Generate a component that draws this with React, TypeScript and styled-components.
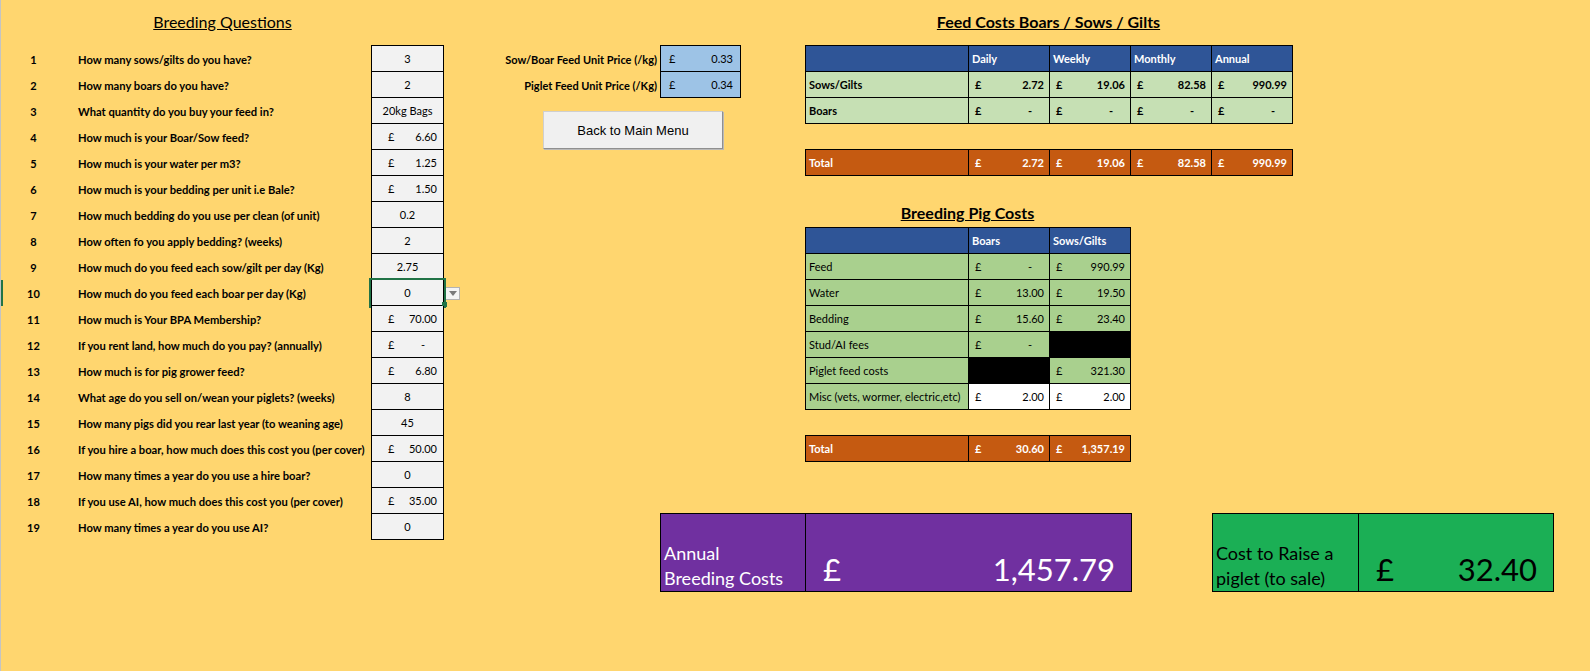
import React from "react";
import styled, { createGlobalStyle, css } from "styled-components";

const GlobalStyle = createGlobalStyle`
  html, body {
    margin: 0;
    padding: 0;
  }
  body {
    background: #ffd66f;
    font-family: Lato, "Open Sans", sans-serif;
    color: #000;
  }
`;

type Tone = "head" | "light" | "mid" | "total" | "black" | "white";

const tones: Record<Tone, { bg: string; fg: string }> = {
  head: { bg: "#2f5597", fg: "#fff" },
  light: { bg: "#c6e0b4", fg: "#000" },
  mid: { bg: "#a9d08e", fg: "#000" },
  total: { bg: "#c55a11", fg: "#fff" },
  black: { bg: "#000", fg: "#000" },
  white: { bg: "#fff", fg: "#000" },
};

type Question = { q: string; v: string; money?: boolean; active?: boolean };

const questions: Question[] = [
  { q: "How many sows/gilts do you have?", v: "3" },
  { q: "How many boars do you have?", v: "2" },
  { q: "What quantity do you buy your feed in?", v: "20kg Bags" },
  { q: "How much is your Boar/Sow feed?", v: "6.60", money: true },
  { q: "How much is your water per m3?", v: "1.25", money: true },
  { q: "How much is your bedding per unit i.e Bale?", v: "1.50", money: true },
  { q: "How much bedding do you use per clean (of unit)", v: "0.2" },
  { q: "How often fo you apply bedding? (weeks)", v: "2" },
  { q: "How much do you feed each sow/gilt per day (Kg)", v: "2.75" },
  { q: "How much do you feed each boar per day (Kg)", v: "0", active: true },
  { q: "How much is Your BPA Membership?", v: "70.00", money: true },
  { q: "If you rent land, how much do you pay? (annually)", v: "-", money: true },
  { q: "How much is for pig grower feed?", v: "6.80", money: true },
  { q: "What age do you sell on/wean your piglets? (weeks)", v: "8" },
  { q: "How many pigs did you rear last year (to weaning age)", v: "45" },
  { q: "If you hire a boar, how much does this cost you (per cover)", v: "50.00", money: true },
  { q: "How many times a year do you use a hire boar?", v: "0" },
  { q: "If you use AI, how much does this cost you (per cover)", v: "35.00", money: true },
  { q: "How many times a year do you use AI?", v: "0" },
];

const feedRows = [
  { label: "Sows/Gilts", values: ["2.72", "19.06", "82.58", "990.99"] },
  { label: "Boars", values: ["-", "-", "-", "-"] },
];

type PigCell = { v: string; tone: Tone };

const pigRows: { label: string; cells: PigCell[] }[] = [
  { label: "Feed", cells: [{ v: "-", tone: "mid" }, { v: "990.99", tone: "mid" }] },
  { label: "Water", cells: [{ v: "13.00", tone: "mid" }, { v: "19.50", tone: "mid" }] },
  { label: "Bedding", cells: [{ v: "15.60", tone: "mid" }, { v: "23.40", tone: "mid" }] },
  { label: "Stud/AI fees", cells: [{ v: "-", tone: "mid" }, { v: "", tone: "black" }] },
  { label: "Piglet feed costs", cells: [{ v: "", tone: "black" }, { v: "321.30", tone: "mid" }] },
  {
    label: "Misc (vets, wormer, electric,etc)",
    cells: [{ v: "2.00", tone: "white" }, { v: "2.00", tone: "white" }],
  },
];

function App() {
  return (
    <>
      <GlobalStyle />
      <Sheet>
        <Questions>
          <SheetTitle>Breeding Questions</SheetTitle>
          {questions.map((item, i) => (
            <QuestionRow key={i}>
              <RowNumber $active={item.active}>{i + 1}</RowNumber>
              <QuestionText>{item.q}</QuestionText>
              <InputCell $first={i === 0} $active={item.active}>
                {item.money ? (
                  <Money $left={16} $right={6}>
                    <span>£</span>
                    {item.v === "-" ? <Dash>-</Dash> : <span>{item.v}</span>}
                  </Money>
                ) : (
                  item.v
                )}
              </InputCell>
              {item.active && <DropButton />}
            </QuestionRow>
          ))}
        </Questions>

        <RightArea>
          <TopRow>
            <PriceArea>
              <PriceRow>
                <PriceLabel>Sow/Boar Feed Unit Price (/kg)</PriceLabel>
                <PriceBox $first>
                  <Money $left={8} $right={7}>
                    <span>£</span>
                    <span>0.33</span>
                  </Money>
                </PriceBox>
              </PriceRow>
              <PriceRow>
                <PriceLabel>Piglet Feed Unit Price (/Kg)</PriceLabel>
                <PriceBox>
                  <Money $left={8} $right={7}>
                    <span>£</span>
                    <span>0.34</span>
                  </Money>
                </PriceBox>
              </PriceRow>
              <MenuButton type="button">Back to Main Menu</MenuButton>
            </PriceArea>

            <Tables>
              <TableTitle $offset={12} $height={45}>
                <TitleText $width={487}>Feed Costs Boars / Sows / Gilts</TitleText>
              </TableTitle>
              <CostGrid $cols="163px 81px 81px 81px 81px">
                <CostCell $tone="head" />
                {["Daily", "Weekly", "Monthly", "Annual"].map((h) => (
                  <CostCell key={h} $tone="head" $bold>
                    {h}
                  </CostCell>
                ))}
                {feedRows.map((row) => (
                  <React.Fragment key={row.label}>
                    <CostCell $tone="light" $bold>
                      {row.label}
                    </CostCell>
                    {row.values.map((v, j) => (
                      <MoneyCell key={j} $tone="light" $bold>
                        <span>£</span>
                        {v === "-" ? <Dash>-</Dash> : <span>{v}</span>}
                      </MoneyCell>
                    ))}
                  </React.Fragment>
                ))}
              </CostGrid>
              <CostGrid $cols="163px 81px 81px 81px 81px" $gap>
                <CostCell $tone="total" $bold>
                  Total
                </CostCell>
                {["2.72", "19.06", "82.58", "990.99"].map((v) => (
                  <MoneyCell key={v} $tone="total" $bold>
                    <span>£</span>
                    <span>{v}</span>
                  </MoneyCell>
                ))}
              </CostGrid>

              <TableTitle $offset={27} $height={51}>
                <TitleText $width={325}>Breeding Pig Costs</TitleText>
              </TableTitle>
              <CostGrid $cols="163px 81px 81px">
                <CostCell $tone="head" />
                <CostCell $tone="head" $bold>
                  Boars
                </CostCell>
                <CostCell $tone="head" $bold>
                  Sows/Gilts
                </CostCell>
                {pigRows.map((row) => (
                  <React.Fragment key={row.label}>
                    <CostCell $tone="mid">{row.label}</CostCell>
                    {row.cells.map((c, j) =>
                      c.tone === "black" ? (
                        <CostCell key={j} $tone="black" />
                      ) : (
                        <MoneyCell key={j} $tone={c.tone}>
                          <span>£</span>
                          {c.v === "-" ? <Dash>-</Dash> : <span>{c.v}</span>}
                        </MoneyCell>
                      )
                    )}
                  </React.Fragment>
                ))}
              </CostGrid>
              <CostGrid $cols="163px 81px 81px" $gap>
                <CostCell $tone="total" $bold>
                  Total
                </CostCell>
                <MoneyCell $tone="total" $bold>
                  <span>£</span>
                  <span>30.60</span>
                </MoneyCell>
                <MoneyCell $tone="total" $bold>
                  <span>£</span>
                  <span>1,357.19</span>
                </MoneyCell>
              </CostGrid>
            </Tables>
          </TopRow>

          <BottomRow>
            <SummaryBox $bg="#7030a0" $fg="#fff">
              <SummaryLabel $width={145}>
                <span>
                  Annual
                  <br />
                  Breeding Costs
                </span>
              </SummaryLabel>
              <SummaryValue $width={325}>
                <span>£</span>
                <span>1,457.79</span>
              </SummaryValue>
            </SummaryBox>
            <SummaryBox $bg="#1baf55" $fg="#000">
              <SummaryLabel $width={146}>
                <span>
                  Cost to Raise a
                  <br />
                  piglet (to sale)
                </span>
              </SummaryLabel>
              <SummaryValue $width={194}>
                <span>£</span>
                <span>32.40</span>
              </SummaryValue>
            </SummaryBox>
          </BottomRow>
        </RightArea>
      </Sheet>
    </>
  );
}

const Sheet = styled.div`
  display: flex;
  align-items: flex-start;
  min-height: 671px;
  box-sizing: border-box;
  border-left: 1px solid #c4c4c4;
`;

const Questions = styled.section`
  flex: none;
  width: 469px;
`;

const SheetTitle = styled.h2`
  margin: 0;
  width: 443px;
  height: 46px;
  box-sizing: border-box;
  padding-top: 12px;
  line-height: 20px;
  text-align: center;
  font-size: 16px;
  font-weight: 400;
  text-decoration: underline;
`;

const QuestionRow = styled.div`
  display: grid;
  grid-template-columns: 65px 305px 73px 26px;
  height: 26px;
  font-size: 11px;
`;

const RowNumber = styled.div<{ $active?: boolean }>`
  display: flex;
  align-items: center;
  justify-content: center;
  font-weight: 700;
  ${(p) =>
    p.$active &&
    css`
      box-shadow: inset 2px 0 0 #217346;
    `}
`;

const QuestionText = styled.div`
  display: flex;
  align-items: center;
  padding-left: 12px;
  font-weight: 700;
  font-size: 11.2px;
  white-space: nowrap;
`;

const InputCell = styled.div<{ $first?: boolean; $active?: boolean }>`
  position: relative;
  box-sizing: border-box;
  height: 26px;
  display: flex;
  align-items: center;
  justify-content: center;
  background: #f2f2f2;
  border: 1px solid #000;
  border-top: none;
  ${(p) =>
    p.$first &&
    css`
      margin-top: -1px;
      height: 27px;
      border-top: 1px solid #000;
    `}
  ${(p) =>
    p.$active &&
    css`
      outline: 2px solid #217346;
      outline-offset: 0;
      &::after {
        content: "";
        position: absolute;
        right: -4px;
        bottom: -2px;
        width: 5px;
        height: 5px;
        background: #217346;
      }
    `}
`;

const Money = styled.div<{ $left: number; $right: number }>`
  display: flex;
  justify-content: space-between;
  width: 100%;
  box-sizing: border-box;
  padding: 0 ${(p) => p.$right}px 0 ${(p) => p.$left}px;
`;

const Dash = styled.span`
  padding-right: 12px;
`;

const DropButton = styled.div`
  width: 15px;
  height: 13px;
  margin: 7px 0 0 1px;
  box-sizing: border-box;
  background: #f4f4f4;
  border: 1px solid #b3b3b3;
  display: flex;
  align-items: center;
  justify-content: center;
  &::before {
    content: "";
    border-left: 4px solid transparent;
    border-right: 4px solid transparent;
    border-top: 5px solid #7a7a7a;
  }
`;

const RightArea = styled.div`
  display: flex;
  flex-direction: column;
`;

const TopRow = styled.div`
  display: flex;
  align-items: flex-start;
`;

const PriceArea = styled.section`
  width: 271px;
  padding-top: 46px;
  display: flex;
  flex-direction: column;
`;

const PriceRow = styled.div`
  display: flex;
  height: 26px;
  font-size: 11px;
`;

const PriceLabel = styled.div`
  flex: 1;
  display: flex;
  align-items: center;
  justify-content: flex-end;
  padding-right: 3px;
  font-weight: 700;
  white-space: nowrap;
`;

const PriceBox = styled.div<{ $first?: boolean }>`
  width: 81px;
  height: 26px;
  box-sizing: border-box;
  display: flex;
  align-items: center;
  background: #9dc3e6;
  border: 1px solid #000;
  border-top: none;
  ${(p) =>
    p.$first &&
    css`
      margin-top: -1px;
      height: 27px;
      border-top: 1px solid #000;
    `}
`;

const MenuButton = styled.button`
  margin: 13px 0 0 73px;
  width: 180px;
  height: 38px;
  padding: 0;
  background: #f0f0f0;
  border: 1px solid #cfcfcf;
  border-right-color: #8f8f8f;
  border-bottom-color: #8f8f8f;
  box-shadow: 1px 1px 0 #b9b9b9;
  font-family: "Liberation Sans", Arial, sans-serif;
  font-size: 13px;
  color: #000;
`;

const Tables = styled.section`
  margin-left: 64px;
  display: flex;
  flex-direction: column;
  align-items: flex-start;
`;

const TableTitle = styled.h2<{ $offset: number; $height: number }>`
  margin: 0;
  align-self: stretch;
  height: ${(p) => p.$height}px;
  box-sizing: border-box;
  padding-top: ${(p) => p.$offset}px;
  line-height: 20px;
  font-size: 16px;
  font-weight: 700;
`;

const TitleText = styled.div<{ $width: number }>`
  width: ${(p) => p.$width}px;
  text-align: center;
  text-decoration: underline;
`;

const CostGrid = styled.div<{ $cols: string; $gap?: boolean }>`
  display: grid;
  grid-template-columns: ${(p) => p.$cols};
  grid-auto-rows: 26px;
  border-top: 1px solid #000;
  border-left: 1px solid #000;
  margin-top: ${(p) => (p.$gap ? 25 : 0)}px;
  font-size: 11px;
`;

const CostCell = styled.div<{ $tone: Tone; $bold?: boolean }>`
  box-sizing: border-box;
  display: flex;
  align-items: center;
  padding: 0 3px;
  border-right: 1px solid #000;
  border-bottom: 1px solid #000;
  background: ${(p) => tones[p.$tone].bg};
  color: ${(p) => tones[p.$tone].fg};
  font-weight: ${(p) => (p.$bold ? 700 : 400)};
  white-space: nowrap;
  overflow: hidden;
`;

const MoneyCell = styled(CostCell)`
  justify-content: space-between;
  padding: 0 5px 0 6px;
`;

const BottomRow = styled.div`
  display: flex;
  gap: 80px;
  margin: 51px 0 0 190px;
`;

const SummaryBox = styled.div<{ $bg: string; $fg: string }>`
  display: flex;
  height: 79px;
  box-sizing: border-box;
  border: 1px solid #000;
  background: ${(p) => p.$bg};
  color: ${(p) => p.$fg};
`;

const SummaryLabel = styled.div<{ $width: number }>`
  width: ${(p) => p.$width}px;
  box-sizing: border-box;
  border-right: 1px solid #000;
  display: flex;
  align-items: flex-end;
  padding: 0 2px 0 3px;
  font-size: 18px;
  line-height: 25px;
  white-space: nowrap;
`;

const SummaryValue = styled.div<{ $width: number }>`
  width: ${(p) => p.$width}px;
  box-sizing: border-box;
  display: flex;
  align-items: flex-end;
  justify-content: space-between;
  padding: 0 16px 6px 17px;
  font-size: 31px;
  line-height: 1;
`;

export default App;
